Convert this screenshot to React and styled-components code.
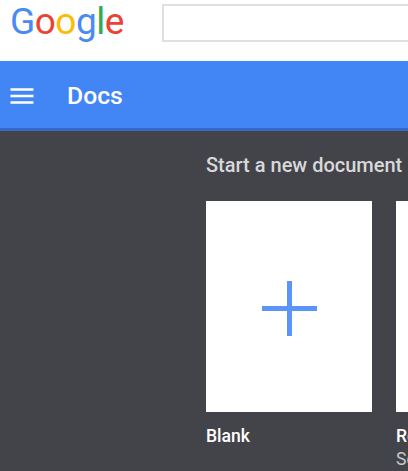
import React from 'react'
import styled, { createGlobalStyle } from 'styled-components'

const GlobalStyle = createGlobalStyle`
  html, body {
    margin: 0;
    height: 100%;
    overflow: hidden;
    background: #434449;
  }
  body {
    font-family: Roboto, "Liberation Sans", sans-serif;
  }
`

const Page = styled.div`
  width: 408px;
  height: 471px;
  overflow: hidden;
  display: flex;
  flex-direction: column;
`

const TopBar = styled.header`
  height: 61px;
  flex: none;
  background: #fff;
  display: flex;
  align-items: flex-start;
  padding-left: 10px;
  gap: 38px;
`

const Logo = styled.div`
  width: 114px;
  flex: none;
  display: flex;
  font-family: Roboto, sans-serif;
  font-weight: 450;
  font-size: 37px;
  line-height: 44px;
  letter-spacing: -0.5px;
`

const Letter = styled.span`
  color: ${(p) => p.$color};
`

const SearchBox = styled.div`
  flex: none;
  width: 400px;
  height: 34px;
  margin-top: 4px;
  background: #fff;
  border: 2px solid #e0e0e0;
`

const AppBar = styled.div`
  height: 67px;
  flex: none;
  background: #4285f4;
  border-bottom: 3px solid #3367c8;
  display: flex;
  align-items: center;
  padding-left: 10px;
`

const MenuIcon = styled.svg`
  width: 24px;
  height: 16px;
  flex: none;
  margin-top: 2px;
`

const AppTitle = styled.h1`
  margin: 2px 0 0 33px;
  color: #fff;
  font-size: 24.75px;
  font-weight: 500;
`

const Content = styled.main`
  flex: 1;
  background: #434449;
  padding: 23px 0 0 206px;
`

const SectionTitle = styled.h2`
  margin: 0 0 24px;
  color: #d8d8da;
  font-size: 20px;
  line-height: 23px;
  font-weight: 500;
  white-space: nowrap;
`

const Templates = styled.div`
  display: flex;
  gap: 24px;
`

const Template = styled.div`
  width: 166px;
  flex: none;
`

const Sheet = styled.div`
  height: 211px;
  background: #fff;
  display: flex;
  align-items: center;
  justify-content: center;
`

const PlusIcon = styled.svg`
  width: 55px;
  height: 55px;
  margin-top: 4px;
`

const Name = styled.div`
  margin-top: 14px;
  color: #fff;
  font-size: 17.6px;
  line-height: 20px;
  font-weight: 500;
  white-space: nowrap;
`

const Sub = styled.div`
  margin-top: 2px;
  color: #c8c8ca;
  font-size: 17.6px;
  line-height: 22px;
  white-space: nowrap;
`

const logoLetters = [
  ['G', '#4a8af4'],
  ['o', '#ea4335'],
  ['o', '#fbbc05'],
  ['g', '#4a8af4'],
  ['l', '#34a853'],
  ['e', '#ea4335'],
]

const App = () => {
  return (
    <Page>
      <GlobalStyle />
      <TopBar>
        <Logo>
          {logoLetters.map(([ch, color], i) => (
            <Letter key={i} $color={color}>
              {ch}
            </Letter>
          ))}
        </Logo>
        <SearchBox />
      </TopBar>
      <AppBar>
        <MenuIcon viewBox="0 0 24 16">
          <path d="M0.5 1.5h23M0.5 8h23M0.5 14.5h23" stroke="#fff" strokeWidth="2.4" fill="none" />
        </MenuIcon>
        <AppTitle>Docs</AppTitle>
      </AppBar>
      <Content>
        <SectionTitle>Start a new document</SectionTitle>
        <Templates>
          <Template>
            <Sheet>
              <PlusIcon viewBox="0 0 55 55">
                <path d="M25 0h5v25h25v5H30v25h-5V30H0v-5h25z" fill="#5a96f8" />
              </PlusIcon>
            </Sheet>
            <Name>Blank</Name>
          </Template>
          <Template>
            <Sheet />
            <Name>Resume</Name>
            <Sub>Serif</Sub>
          </Template>
        </Templates>
      </Content>
    </Page>
  )
}

export default App
